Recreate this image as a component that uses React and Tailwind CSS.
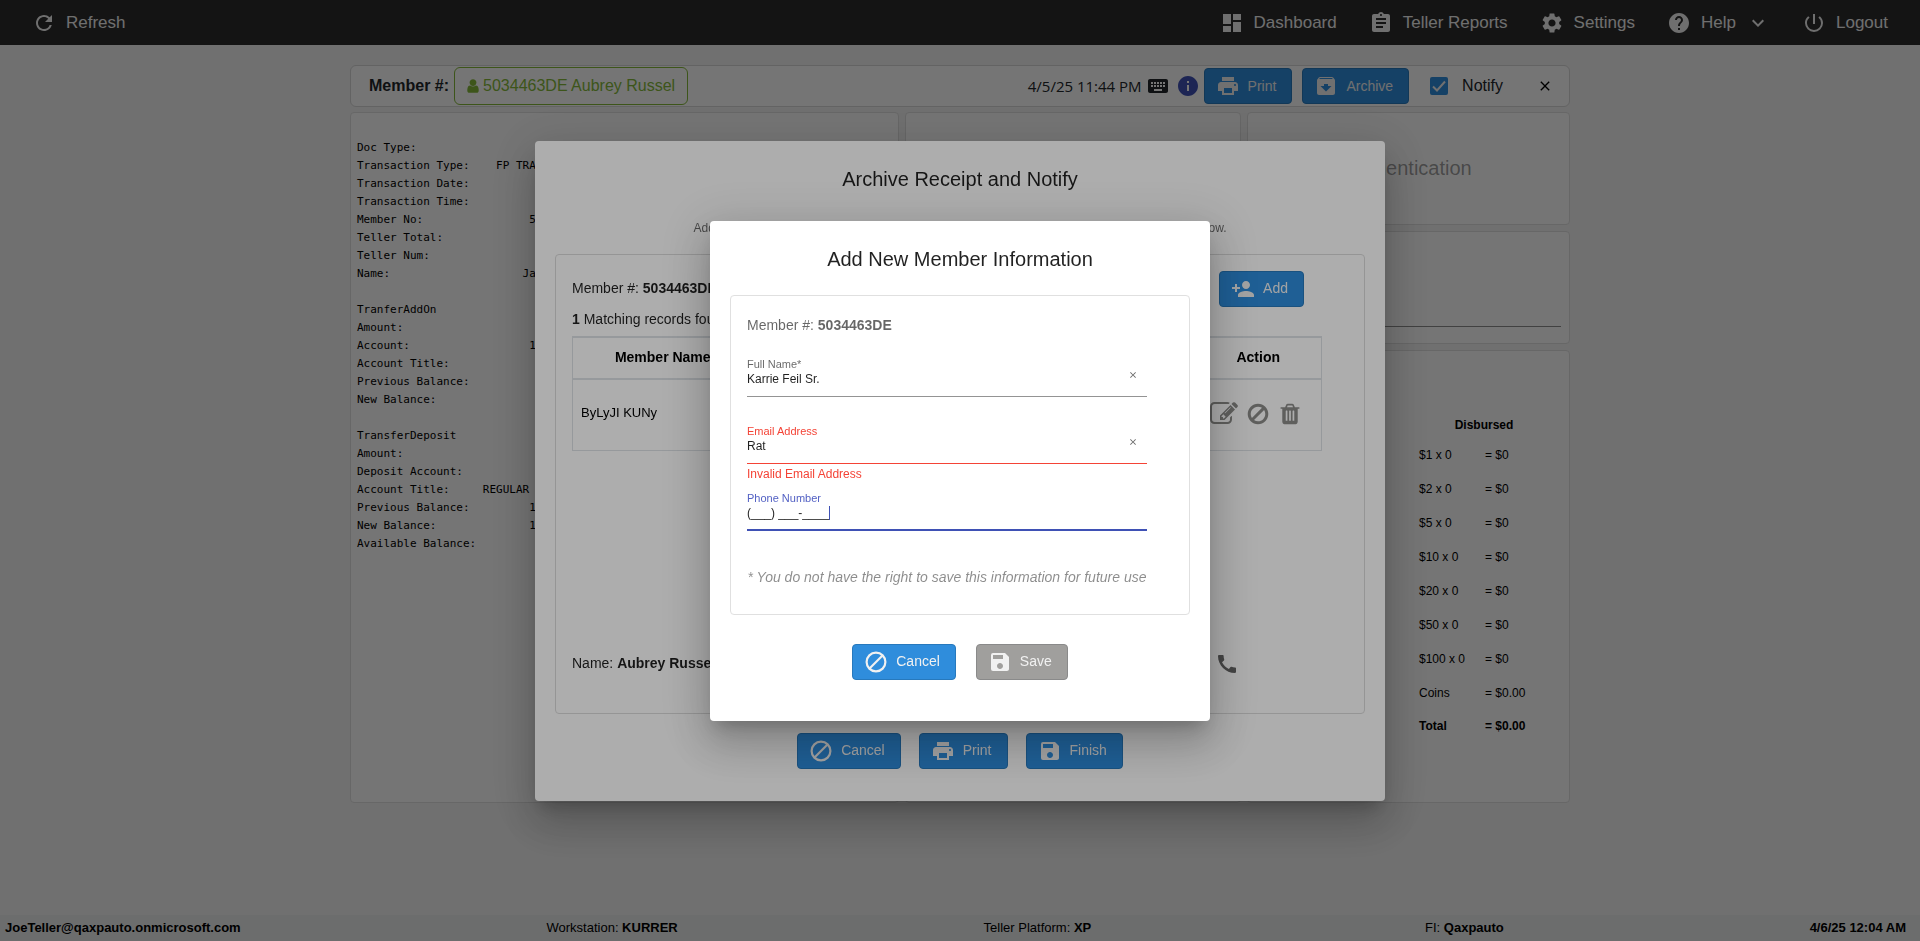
import { useState } from 'react'
import {
  MdArchive, MdAssignment, MdCall, MdClose, MdDashboard, MdExpandMore, MdHelp, MdInfo, MdKeyboard,
  MdPersonAdd, MdPowerSettingsNew, MdPrint, MdRefresh, MdSave, MdSettings,
} from 'react-icons/md'

const NAV_ITEMS = [
  { icon: MdDashboard,        label: 'Dashboard' },
  { icon: MdAssignment,       label: 'Teller Reports' },
  { icon: MdSettings,         label: 'Settings' },
  { icon: MdHelp,             label: 'Help', menu: true },
  { icon: MdPowerSettingsNew, label: 'Logout' },
]

const RECEIPT = `Doc Type:
Transaction Type:    FP TRANSFER
Transaction Date:
Transaction Time:
Member No:                503446
Teller Total:
Teller Num:
Name:                    James

TranferAddOn
Amount:
Account:                  1
Account Title:
Previous Balance:
New Balance:

TransferDeposit
Amount:
Deposit Account:
Account Title:     REGULAR SHARE
Previous Balance:         1
New Balance:              1
Available Balance:`

const DISBURSED = [
  ['$1 x 0', '= $0'],
  ['$2 x 0', '= $0'],
  ['$5 x 0', '= $0'],
  ['$10 x 0', '= $0'],
  ['$20 x 0', '= $0'],
  ['$50 x 0', '= $0'],
  ['$100 x 0', '= $0'],
  ['Coins', '= $0.00'],
]

export default function App() {
  return (
    <div className="min-h-screen flex flex-col bg-[#f2f2f2] font-['Liberation_Sans',Arial,sans-serif] text-black">
      <TopBar />
      <main className="flex-1 w-full max-w-[1220px] mx-auto pt-5">
        <MemberBar />
        <Panels />
      </main>
      <StatusBar />
      <ArchiveDialog />
      <MemberDialog />
    </div>
  )
}

/* ── Page ── */
function TopBar() {
  return (
    <header className="h-[45px] shrink-0 flex items-center justify-between px-8 bg-[#2c2c2c] text-[17px] text-[#f0f0f0]">
      <button className="flex items-center gap-[10px]">
        <MdRefresh size={24} />
        Refresh
      </button>
      <nav className="flex items-center gap-8">
        {NAV_ITEMS.map(({ icon: Icon, label, menu }) => (
          <a key={label} href="#" className="flex items-center gap-[10px]">
            <Icon size={24} />
            {label}
            {menu && <MdExpandMore size={24} />}
          </a>
        ))}
      </nav>
    </header>
  )
}

function MemberBar() {
  const [notify, setNotify] = useState(true)

  return (
    <section className="h-[42px] flex items-center justify-between pl-[18px] pr-4 border border-[#d5d5d5] rounded-md bg-[#fdfdfd]">
      <div className="flex items-center gap-[5px]">
        <span className="font-bold text-[#212529]">Member #:</span>
        <button className="h-[38px] px-3 flex items-center gap-1 border border-[#84b83a] rounded-md text-[#84b83a]">
          <UserIcon />
          5034463DE Aubrey Russel
        </button>
      </div>
      <div className="flex items-center">
        <span className="font-['Open_Sans',sans-serif] text-[15px] text-[#212529]">4/5/25 11:44 PM</span>
        <button aria-label="Keyboard" className="ml-1 text-[#212529]"><MdKeyboard size={24} /></button>
        <button aria-label="Information" className="ml-[6px] text-[#3f51b5]"><MdInfo size={24} /></button>
        <div className="ml-1 flex gap-[10px]">
          <ActionButton icon={MdPrint} label="Print" />
          <ActionButton icon={MdArchive} label="Archive" />
        </div>
        <label className="ml-[21px] flex items-center gap-[14px] text-[#212529]">
          <span className="relative w-[18px] h-[18px]">
            <input
              type="checkbox"
              checked={notify}
              onChange={e => setNotify(e.target.checked)}
              className="peer appearance-none block w-[18px] h-[18px] rounded-xs border-2 border-[#2f8ddc] checked:bg-[#2f8ddc]"
            />
            <CheckIcon />
          </span>
          Notify
        </label>
        <button aria-label="Close" className="ml-[34px]"><MdClose size={16} /></button>
      </div>
    </section>
  )
}

function Panels() {
  return (
    <div className="mt-[5px] grid grid-cols-[549fr_335fr_323fr] gap-[6px]">
      <Panel className="pt-[26px] px-[6px]">
        <pre className="w-fit font-['DejaVu_Sans_Mono',monospace] text-[11px] leading-[18px]">{RECEIPT}</pre>
      </Panel>
      <Panel />
      <div className="flex flex-col gap-[6px]">
        <Panel className="h-[113px] pb-[2px] flex items-center justify-center">
          <h2 className="text-[20px] text-black/40">Authentication</h2>
        </Panel>
        <Panel className="h-[113px] px-2 pb-4 flex flex-col justify-end">
          <input aria-label="Authentication note" className="w-full border-b border-[#8c8c8c] outline-none" />
        </Panel>
        <Panel className="pt-[66px] pr-5 pb-[60px] flex justify-end">
          <table className="w-[130px] text-[12px] leading-4 text-left">
            <thead>
              <tr>
                <th colSpan={2} className="text-center pb-[5px]">Disbursed</th>
              </tr>
            </thead>
            <tbody>
              {DISBURSED.map(([unit, amount]) => (
                <tr key={unit} className="h-[34px]">
                  <td className="w-[66px]">{unit}</td>
                  <td>{amount}</td>
                </tr>
              ))}
              <tr className="h-8 font-bold">
                <td>Total</td>
                <td>= $0.00</td>
              </tr>
            </tbody>
          </table>
        </Panel>
      </div>
    </div>
  )
}

function Panel({ className = '', children }) {
  return <section className={`border border-[#dedede] rounded bg-[#fdfdfd] ${className}`}>{children}</section>
}

function StatusBar() {
  return (
    <footer className="h-[26px] shrink-0 flex items-center justify-between pl-[5px] pr-[14px] bg-[#e9ebec] text-[13px]">
      <b>JoeTeller@qaxpauto.onmicrosoft.com</b>
      <span>Workstation: <b>KURRER</b></span>
      <span className="pr-7">Teller Platform: <b>XP</b></span>
      <span>FI: <b>Qaxpauto</b></span>
      <b>4/6/25 12:04 AM</b>
    </footer>
  )
}

/* ── Dialogs ── */
function Dialog({ title, className, children }) {
  return (
    <div className="fixed inset-0 flex items-center justify-center bg-black/32">
      <div
        role="dialog"
        aria-label={title}
        className={`px-5 bg-white rounded flex flex-col shadow-[0_11px_15px_-7px_rgba(0,0,0,0.2),0_24px_38px_3px_rgba(0,0,0,0.14),0_9px_46px_8px_rgba(0,0,0,0.12)] ${className}`}
      >
        <h2 className="pt-6 text-[20px] leading-7 text-center text-black/87">{title}</h2>
        {children}
      </div>
    </div>
  )
}

function ArchiveDialog() {
  return (
    <Dialog title="Archive Receipt and Notify" className="w-[850px] pb-8">
      <p className="mt-[25px] text-[12px] leading-5 text-center text-black/60">
        Add a new member or pick one of the matching records from the list, then select who to notify below.
      </p>
      <div className="mt-4 h-[460px] px-4 border border-[#dcdcdc] rounded flex flex-col text-[14px] text-black/87">
        <div className="pt-4 pr-11 flex items-center justify-between">
          <span>Member #: <b>5034463DE</b></span>
          <ActionButton icon={MdPersonAdd} label="Add" />
        </div>
        <p className="mt-[2px]"><b>1</b> Matching records found</p>
        <table className="mt-[6px] w-[750px] table-fixed border border-t-2 border-[#dee2e6] text-black">
          <thead>
            <tr className="h-[42px] border-b-2 border-[#dee2e6]">
              <th className="w-[180px]">Member Name</th>
              <th>Email Address</th>
              <th>Phone Number</th>
              <th className="w-[126px]">Action</th>
            </tr>
          </thead>
          <tbody>
            <tr className="h-[72px]">
              <td className="pl-2 pb-1 text-[13px]">ByLyJI KUNy</td>
              <td />
              <td />
              <td className="pr-1 pb-[2px]">
                <div className="flex items-center justify-center gap-2 text-[#8c8c8a]">
                  <button aria-label="Edit"><EditIcon /></button>
                  <button aria-label="Block"><BanIcon /></button>
                  <button aria-label="Delete"><TrashIcon /></button>
                </div>
              </td>
            </tr>
          </tbody>
        </table>
        <div className="mt-auto pb-[37px] pr-[109px] flex items-center justify-between">
          <span>Name: <b>Aubrey Russel</b></span>
          <button aria-label="Call" className="text-black/60"><MdCall size={24} /></button>
        </div>
      </div>
      <div className="mt-[19px] flex justify-center gap-[18px]">
        <ActionButton icon={CancelIcon} label="Cancel" />
        <ActionButton icon={MdPrint} label="Print" />
        <ActionButton icon={MdSave} label="Finish" />
      </div>
    </Dialog>
  )
}

function MemberDialog() {
  const [name, setName]   = useState('Karrie Feil Sr.')
  const [email, setEmail] = useState('Rat')
  const [phone, setPhone] = useState('(___) ___-____')

  return (
    <Dialog title="Add New Member Information" className="w-[500px] pb-[41px]">
      <div className="mt-[22px] px-4 pt-[17px] pb-[25px] border border-[#e0e0e0] rounded">
        <p className="text-[14px] leading-6 text-black/60">Member #: <b>5034463DE</b></p>
        <div className="mt-[19px] w-[400px]">
          <Field id="name" label="Full Name*" value={name} onChange={setName} clearable />
          <Field id="email" label="Email Address" value={email} onChange={setEmail} clearable error="Invalid Email Address" />
          <Field id="phone" label="Phone Number" value={phone} onChange={setPhone} active />
          <p className="mt-2 text-[14px] leading-6 text-center italic text-black/45 whitespace-nowrap">
            * You do not have the right to save this information for future use
          </p>
        </div>
      </div>
      <div className="mt-[29px] flex justify-center gap-5">
        <ActionButton icon={CancelIcon} label="Cancel" />
        <ActionButton icon={MdSave} label="Save" disabled />
      </div>
    </Dialog>
  )
}

function Field({ id, label, value, onChange, clearable, error, active }) {
  const line = error
    ? 'border-b border-[#f44336]'
    : active ? 'border-b-2 border-[#3f51b5]' : 'border-b border-[#949494]'
  const labelColor = error ? 'text-[#f44336]' : active ? 'text-[#5361c4]' : 'text-black/60'

  return (
    <div className="h-[67px]">
      <div className={`h-[41px] flex items-start ${line}`}>
        <div className="flex-1 flex flex-col">
          <label htmlFor={id} className={`text-[11px] leading-4 ${labelColor}`}>{label}</label>
          <span className="flex items-center h-[14px]">
            <input
              id={id}
              value={value}
              onChange={e => onChange(e.target.value)}
              className="field-sizing-content text-[12px] leading-[14px] text-black/87 outline-none"
            />
            {active && <span className="w-px h-[14px] bg-[#3f51b5]" />}
          </span>
        </div>
        {clearable && (
          <button aria-label={`Clear ${label}`} onClick={() => onChange('')} className="mt-[14px] mr-[9px] text-black/60">
            <MdClose size={10} />
          </button>
        )}
      </div>
      {error && <p className="pt-[2px] text-[12px] leading-4 text-[#f44336]">{error}</p>}
    </div>
  )
}

function ActionButton({ icon: Icon, label, disabled }) {
  const color = disabled ? 'bg-[#a09f9d] border-[#8a8a8a]' : 'bg-[#2f8ddc] border-[#2779bd]'
  return (
    <button
      disabled={disabled}
      className={`h-9 pl-[11px] pr-[15px] flex items-center gap-2 border rounded text-[14px] text-[#f1f1f1] ${color}`}
    >
      <Icon size={24} />
      {label}
    </button>
  )
}

/* ── Icons ── */
function CancelIcon({ size = 24 }) {
  return <svg width={size} height={size} viewBox="0 0 24 24" fill="none" stroke="currentColor" strokeWidth="2.2"><circle cx="12" cy="12" r="9.4"/><path d="M5.5 18.5L18.5 5.5"/></svg>
}
function CheckIcon() {
  return <svg className="hidden peer-checked:block absolute inset-0 pointer-events-none" width="18" height="18" viewBox="0 0 18 18" fill="none" stroke="#f1f1f1" strokeWidth="2"><path d="M3 9.5l4 4L15 4.5"/></svg>
}
function UserIcon() {
  return <svg width="12" height="16" viewBox="256 0 1280 1792" fill="currentColor"><path d="M1536 1399q0 109-62.5 187t-150.5 78h-854q-88 0-150.5-78t-62.5-187q0-85 8.5-160.5t31.5-152 58.5-131 94-89 134.5-34.5q131 128 313 128t313-128q76 0 134.5 34.5t94 89 58.5 131 31.5 152 8.5 160.5zm-256-887q0 159-112.5 271.5t-271.5 112.5-271.5-112.5-112.5-271.5 112.5-271.5 271.5-112.5 271.5 112.5 112.5 271.5z"/></svg>
}
function EditIcon() {
  return <svg width="28" height="28" viewBox="0 0 1792 1792" fill="currentColor"><path d="M888 1184l116-116-152-152-116 116v56h96v96h56zm440-720q-16-16-33 1l-350 350q-17 17-1 33t33-1l350-350q17-17 1-33zm80 594v190q0 119-84.5 203.5t-203.5 84.5h-832q-119 0-203.5-84.5t-84.5-203.5v-832q0-119 84.5-203.5t203.5-84.5h832q63 0 117 25 15 7 18 23 3 17-9 29l-49 49q-14 14-32 8-23-6-45-6h-832q-66 0-113 47t-47 113v832q0 66 47 113t113 47h832q66 0 113-47t47-113v-126q0-13 9-22l64-64q15-15 35-7t20 29zm-96-738l288 288-672 672h-288v-288zm444 132l-92 92-288-288 92-92q28-28 68-28t68 28l152 152q28 28 28 68t-28 68z"/></svg>
}
function BanIcon() {
  return <svg width="24" height="24" viewBox="0 0 1792 1792" fill="currentColor"><path d="M1440 893q0-161-87-295l-754 753q137 89 297 89 111 0 211.5-43.5t173.5-116.5 116-174.5 43-212.5zm-999 299l755-754q-135-91-300-91-148 0-273 73t-198 199-73 274q0 162 89 299zm1223-299q0 157-61 300t-163.5 246-245 164-298.5 61-298.5-61-245-164-163.5-246-61-300 61-299.5 163.5-245.5 245-164 298.5-61 298.5 61 245 164 163.5 245.5 61 299.5z"/></svg>
}
function TrashIcon() {
  return <svg width="24" height="24" viewBox="0 0 1792 1792" fill="currentColor"><path d="M704 1376v-704q0-14-9-23t-23-9h-64q-14 0-23 9t-9 23v704q0 14 9 23t23 9h64q14 0 23-9t9-23zm256 0v-704q0-14-9-23t-23-9h-64q-14 0-23 9t-9 23v704q0 14 9 23t23 9h64q14 0 23-9t9-23zm256 0v-704q0-14-9-23t-23-9h-64q-14 0-23 9t-9 23v704q0 14 9 23t23 9h64q14 0 23-9t9-23zm-544-992h448l-48-117q-7-9-17-11h-317q-10 2-17 11zm928 32v64q0 14-9 23t-23 9h-96v948q0 83-47 143.5t-113 60.5h-832q-66 0-113-58.5t-47-141.5v-952h-96q-14 0-23-9t-9-23v-64q0-14 9-23t23-9h309l70-167q15-37 54-63t79-26h320q40 0 79 26t54 63l70 167h309q14 0 23 9t9 23z"/></svg>
}
